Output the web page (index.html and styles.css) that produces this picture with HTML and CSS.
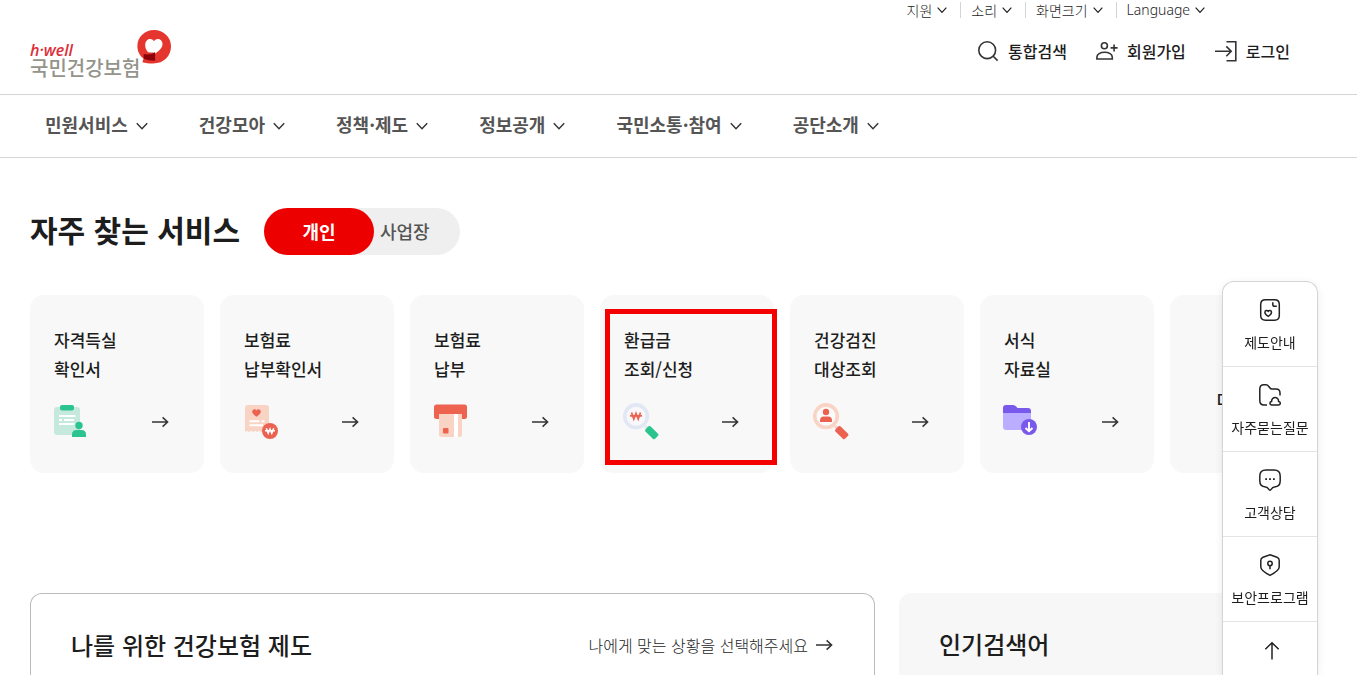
FILE: index.html
```html
<!DOCTYPE html>
<html lang="ko">
<head>
<meta charset="utf-8">
<meta name="viewport" content="width=device-width, initial-scale=1">
<title>국민건강보험</title>
<link rel="stylesheet" href="styles.css">
</head>
<body>
<svg class="defs" aria-hidden="true">
  <symbol id="chev" viewBox="0 0 12 12"><path d="M0.8 3.2 6 8.8 11.2 3.2" fill="none" stroke="currentColor" stroke-width="1.4"/></symbol>
  <symbol id="arrow" viewBox="0 0 18 12"><path d="M1 6H16.6M11.6 1.4 16.6 6 11.6 10.6" fill="none" stroke="currentColor" stroke-width="1.5"/></symbol>
</svg>
<div class="page">
  <header class="header">
    <a class="logo" href="#" aria-label="h-well 국민건강보험">
      <span class="logo-text"><span class="logo-en">h·well</span><span class="logo-ko">국민건강보험</span></span>
      <svg class="logo-mark" viewBox="0 0 34 34" aria-hidden="true">
        <path d="M17 0C26.4 0 34 7 34 16.2 34 26 27 33.4 16 33.4 12 33.4 8.500 33.100 5.400 32.200L6.600 28.500C2.700 25.700 0.400 21.500 0.400 16.200 0.400 7 7.600 0 17 0Z" fill="#e5352f"/>
        <path d="M17 11.200C18.600 8.500 22.100 8.300 24 10.200 26.100 12.300 26 15.600 24.100 18.200 22.500 20.400 20.200 22 18 23.800L17.800 22.700 11 22.200C9.200 20 8 17.500 8.200 14.500 8.500 9 14.500 7.400 17 11.200Z" fill="#fff"/>
        <path d="M6.700 24Q12.500 25.400 18.100 22.200V30.600Q12 30.900 6.700 28.700Z" fill="#8d0008"/>
      </svg>
    </a>
    <div class="tools">
      <div class="utility">
        <button type="button">지원<svg><use href="#chev"/></svg></button>
        <button type="button">소리<svg><use href="#chev"/></svg></button>
        <button type="button">화면크기<svg><use href="#chev"/></svg></button>
        <button type="button" class="lang">Language<svg><use href="#chev"/></svg></button>
      </div>
      <div class="account">
        <a href="#"><svg viewBox="0 0 22 22"><circle cx="10.200" cy="10.200" r="8.400"/><path d="M16.200 16.200 20.600 20.600"/></svg>통합검색</a>
        <a href="#"><svg viewBox="0 0 22 22"><circle cx="8.400" cy="5.800" r="3"/><path d="M.9 19V17.200C.9 14.300 4.300 12.300 8.600 12.300S16.300 14.300 16.300 17.200V19ZM18.100 4.400V11.400M14.600 7.900H21.600"/></svg>회원가입</a>
        <a href="#"><svg viewBox="0 0 22 22"><path d="M11.500 1.800H20.800V20.800H11.500M0 11.300H16M11.300 6.400 16.200 11.300 11.300 16.200"/></svg>로그인</a>
      </div>
    </div>
  </header>
  <nav class="nav" aria-label="주 메뉴">
    <button type="button">민원서비스<svg><use href="#chev"/></svg></button>
    <button type="button">건강모아<svg><use href="#chev"/></svg></button>
    <button type="button">정책·제도<svg><use href="#chev"/></svg></button>
    <button type="button">정보공개<svg><use href="#chev"/></svg></button>
    <button type="button">국민소통·참여<svg><use href="#chev"/></svg></button>
    <button type="button">공단소개<svg><use href="#chev"/></svg></button>
  </nav>
  <main class="main">
    <div class="title-row">
      <h1>자주 찾는 서비스</h1>
      <div class="toggle">
        <button type="button" class="on" aria-pressed="true">개인</button>
        <button type="button" class="off" aria-pressed="false">사업장</button>
      </div>
    </div>
    <div class="cards">
      <a class="card" href="#">
        <span class="card-title">자격득실<br>확인서</span>
        <span class="card-foot">
          <svg class="pic" viewBox="0 0 36 38"><rect x="1" y="4" width="26" height="28" rx="3" fill="#c5eadd"/><rect x="7" y="2" width="14" height="5.500" rx="2" fill="#2cc48e"/><path d="M6 13H22.500M6 17H9M11 17H21M6 21H21.500" stroke="#fff" stroke-width="2"/><circle cx="26" cy="22.500" r="3.700" fill="#2cc48e"/><path d="M19 34V31.500Q19 27 23.500 27H28.500Q33 27 33 31.500V34Z" fill="#2cc48e"/></svg>
          <svg class="go"><use href="#arrow"/></svg>
        </span>
      </a>
      <a class="card" href="#">
        <span class="card-title">보험료<br>납부확인서</span>
        <span class="card-foot">
          <svg class="pic" viewBox="0 0 36 38"><path d="M2 5Q2 2 5 2H23Q26 2 26 5V29L24 27.800 22 29 20 27.800 18 29 16 27.800 14 29 12 27.800 10 29 8 27.800 6 29 4 27.800 2 29Z" fill="#f9d3c3"/><path d="M13.500 13.800C10.500 11.600 9.200 10.300 9.200 8.600 9.200 6 12.300 5.300 13.500 7.400 14.700 5.300 17.800 6 17.800 8.600 17.800 10.300 16.500 11.600 13.500 13.800Z" fill="#eb6350"/><path d="M6.500 18.200H16.500M18.500 18.200H21.500M6.500 22.200H20" stroke="#fff" stroke-width="2"/><circle cx="27" cy="28" r="8" fill="#eb6350"/><path d="M23.300 25.300 25.200 30.200 27 26 28.800 30.200 30.700 25.300M22 27.800H32" fill="none" stroke="#fff" stroke-width="1.600"/></svg>
          <svg class="go"><use href="#arrow"/></svg>
        </span>
      </a>
      <a class="card" href="#">
        <span class="card-title">보험료<br>납부</span>
        <span class="card-foot">
          <svg class="pic" viewBox="0 0 36 38"><rect x="1" y="1.500" width="33" height="14.500" rx="2.500" fill="#ee6350"/><path d="M6 11H29V31Q29 34 26 34H9Q6 34 6 31Z" fill="#f9d3c3"/><path d="M21 11H25V34H21Z" fill="#fff"/><rect x="10" y="25" width="5.500" height="5.500" rx="1" fill="#ee6350"/></svg>
          <svg class="go"><use href="#arrow"/></svg>
        </span>
      </a>
      <a class="card marked" href="#">
        <span class="card-title">환급금<br>조회/신청</span>
        <span class="card-foot">
          <svg class="pic" viewBox="0 0 36 38"><circle cx="13" cy="13.200" r="11.300" fill="#f8f8fb" stroke="#e2e7f4" stroke-width="3.600"/><path d="M22 23 25 26" stroke="#e2e7f4" stroke-width="3"/><path d="M8.500 9.500 10.800 16 13 10.500 15.200 16 17.500 9.500M7 12.800H19" fill="none" stroke="#eb6350" stroke-width="1.800"/><rect x="22" y="26" width="13.500" height="7.200" rx="1.800" transform="rotate(44 28.750 29.600)" fill="#2cc48e"/></svg>
          <svg class="go"><use href="#arrow"/></svg>
        </span>
      </a>
      <a class="card" href="#">
        <span class="card-title">건강검진<br>대상조회</span>
        <span class="card-foot">
          <svg class="pic" viewBox="0 0 36 38"><circle cx="13" cy="13.200" r="11.300" fill="#fafafa" stroke="#f9d3c3" stroke-width="3.600"/><path d="M22 23 25 26" stroke="#f9d3c3" stroke-width="3"/><circle cx="13" cy="9" r="3.200" fill="#eb6350"/><path d="M7 19V17.500Q7 13.500 11 13.500H15Q19 13.500 19 17.500V19Z" fill="#eb6350"/><rect x="22" y="26" width="13.500" height="7.200" rx="1.800" transform="rotate(44 28.750 29.600)" fill="#eb6350"/></svg>
          <svg class="go"><use href="#arrow"/></svg>
        </span>
      </a>
      <a class="card" href="#">
        <span class="card-title">서식<br>자료실</span>
        <span class="card-foot">
          <svg class="pic" viewBox="0 0 36 38"><path d="M0 5Q0 2 3 2H10Q12 2 13.200 3.600L14.500 5H25Q28 5 28 8V12H0Z" fill="#7859ec"/><path d="M0 10H28V27H3Q0 27 0 24Z" fill="#bbadff"/><circle cx="26" cy="24" r="8" fill="#7859ec"/><path d="M26 19V28M22.500 25 26 28.300 29.500 25" fill="none" stroke="#fff" stroke-width="1.900"/></svg>
          <svg class="go"><use href="#arrow"/></svg>
        </span>
      </a>
      <a class="card more" href="#">더보기<svg class="go"><use href="#arrow"/></svg></a>
    </div>
    <div class="panels">
      <section class="panel">
        <h2>나를 위한 건강보험 제도</h2>
        <a href="#">나에게 맞는 상황을 선택해주세요<svg class="go"><use href="#arrow"/></svg></a>
      </section>
      <section class="panel gray"><h2>인기검색어</h2></section>
    </div>
  </main>
</div>
<aside class="quick">
  <a href="#"><svg viewBox="0 0 24 24"><path d="M8 1.800H16.500Q21.300 1.800 21.300 6.500V17.500Q21.300 22.200 16.500 22.200H7.500Q2.700 22.200 2.700 17.500V6.500Q2.700 1.800 7.500 1.800ZM14.800 4.300V6.500Q14.800 8.300 16.600 8.300H18.800M10.200 18.300C7.800 17 6.900 15.800 6.900 14.300 6.900 12.200 9.300 12 10.200 13.300 11.100 12 13.500 12.200 13.500 14.300 13.500 15.800 12.600 17 10.200 18.300Z"/></svg>제도안내</a>
  <a href="#"><svg viewBox="0 0 24 24"><path d="M9 22H6Q1.800 22 1.800 17.500V6Q1.800 1.800 6 1.800H8Q9.600 1.800 10.600 3.200L12 5Q12.600 6 14 6H18Q22 6 22 10V12.500M14 22H20.200C23 22 22.900 18.600 20.600 18.400 20.700 13.200 13.500 13.200 13.600 18.400 11.300 18.700 11.300 22 14 22Z"/></svg>자주묻는질문</a>
  <a href="#"><svg viewBox="0 0 24 24"><path d="M8 2H16Q22.200 2 22.200 8V13Q22.200 18.600 16.500 18.900 14.500 19 13.300 21.200 12 23.300 10.700 21.200 9.500 19 7.500 18.900 1.800 18.600 1.800 13V8Q1.800 2 8 2Z"/><path d="M7.200 11.200H9M11.100 11.200H12.900M15 11.200H16.800" stroke-width="1.800"/></svg>고객상담</a>
  <a href="#"><svg viewBox="0 0 24 24"><path d="M12 1.800 19 4.200Q21.200 5 21.200 7.300V14Q21.200 17.600 12 22.300 2.800 17.600 2.800 14V7.300Q2.800 5 5 4.200Z"/><circle cx="12" cy="10.500" r="2.200"/><path d="M12 12.700V16.200"/></svg>보안프로그램</a>
  <a class="top" href="#" aria-label="맨 위로"><svg viewBox="0 0 24 24"><path d="M14 21.500V4.800M7.300 11.300 14 4.800 20.700 11.300"/></svg></a>
</aside>
</body>
</html>
```

FILE: styles.css
```css
* { box-sizing: border-box; }
body {
  margin: 0;
  background: #fff;
  color: #1d1d1d;
  font-family: "Noto Sans CJK KR", "Noto Sans", sans-serif;
  font-size: 16px;
}
a { color: inherit; text-decoration: none; }
button {
  padding: 0;
  border: 0;
  background: none;
  color: inherit;
  font: inherit;
  cursor: pointer;
}
h1, h2 { margin: 0; }
svg { display: block; flex: none; }
.defs { position: absolute; width: 0; height: 0; }
.page { display: flex; flex-direction: column; min-height: 100vh; }

.header {
  display: flex;
  justify-content: space-between;
  height: 95px;
  padding-left: 30px;
  border-bottom: 1px solid #d4d4d4;
}
.logo { display: flex; align-items: flex-start; padding-top: 30px; }
.logo-text { display: flex; flex-direction: column; padding-top: 12px; }
.logo-en {
  color: #dc3038;
  font: italic 600 16px/16px "Open Sans", sans-serif;
}
.logo-ko {
  color: #94948a;
  font-size: 20px;
  font-weight: 500;
  line-height: 20px;
  margin-right: -3px;
}
.logo-mark { width: 34px; height: 34px; }
.tools { display: flex; flex-direction: column; }
.utility {
  display: flex;
  justify-content: flex-end;
  padding-right: 152px;
  font-size: 14px;
  font-weight: 300;
  line-height: 18px;
}
.utility button { display: flex; align-items: center; gap: 5px; height: 20px; }
.utility .lang { font-family: "Noto Sans", sans-serif; }
.utility svg { width: 10px; height: 10px; }
.utility button + button::before {
  content: "";
  width: 1px;
  height: 16px;
  margin: 0 5px 0 13px;
  background: #d4d4d4;
}
.account {
  display: flex;
  justify-content: flex-end;
  gap: 29px;
  padding: 18px 67px 0 0;
  font-weight: 500;
  line-height: 26px;
}
.account a { display: flex; align-items: center; gap: 9px; }
.account svg {
  width: 22px;
  height: 22px;
  fill: none;
  stroke: #333;
  stroke-width: 1.6;
}

.nav {
  display: flex;
  gap: 51px;
  height: 63px;
  padding: 0 45px 5px;
  border-bottom: 1px solid #d4d4d4;
  color: #555;
  font-size: 18px;
  font-weight: 700;
}
.nav button { display: flex; align-items: center; gap: 8px; white-space: nowrap; }
.nav svg { width: 12px; height: 12px; margin-top: 4px; color: #333; }

.main {
  flex: 1;
  display: flex;
  flex-direction: column;
  padding: 50px 40px 0 30px;
}
.title-row { display: flex; align-items: flex-start; gap: 24px; height: 47px; }
h1 { font-size: 30px; font-weight: 700; line-height: 42px; }
.toggle {
  display: flex;
  border-radius: 24px;
  background: #efefef;
  font-size: 18px;
  font-weight: 500;
  line-height: 47px;
}
.on { width: 110px; border-radius: 24px; background: #ec0000; color: #fff; font-weight: 700; }
.off { padding: 0 30px 0 6px; color: #555; }

.cards { display: flex; gap: 16px; margin-top: 40px; overflow: hidden; }
.card {
  position: relative;
  flex: 0 0 174px;
  padding: 30px 24px 32px;
  border-radius: 14px;
  background: #f8f8f8;
}
.card-title { display: block; font-size: 17px; font-weight: 500; line-height: 29px; }
.card-foot {
  display: flex;
  align-items: center;
  justify-content: space-between;
  margin: 20px 11px 0 -1px;
}
.pic { width: 36px; height: 38px; }
.go { width: 18px; height: 12px; color: #333; }
.marked::after {
  content: "";
  position: absolute;
  inset: 14px -3px 8px 5px;
  border: 5px solid #f40000;
}
.more {
  display: flex;
  align-items: center;
  justify-content: center;
  gap: 16px;
  padding: 60px 0 30px;
  font-size: 17px;
  font-weight: 500;
}

.panels {
  flex: 1;
  display: grid;
  grid-template-columns: 845fr 418fr;
  gap: 24px;
  margin-top: 120px;
}
.panel {
  display: flex;
  align-items: flex-start;
  justify-content: space-between;
  padding: 32px 41px 0 40px;
  border: 1px solid #bbb;
  border-bottom: 0;
  border-radius: 12px 12px 0 0;
}
.panel h2 { font-size: 24px; font-weight: 500; line-height: 38px; }
.panel a {
  display: flex;
  align-items: center;
  gap: 7px;
  font-weight: 300;
  line-height: 38px;
}
.gray { border: 0; background: #f7f7f7; }

.quick {
  position: fixed;
  top: 281px;
  right: 39px;
  bottom: 0;
  width: 96px;
  border: 1px solid #d4d4d4;
  border-bottom: 0;
  border-radius: 12px 12px 0 0;
  background: #fff;
  box-shadow: 0 2px 8px rgba(0, 0, 0, 0.08);
  overflow: hidden;
}
.quick a {
  display: flex;
  flex-direction: column;
  align-items: center;
  gap: 10px;
  height: 85px;
  padding-top: 16px;
  border-bottom: 1px solid #e4e4e4;
  font-size: 14px;
  line-height: 20px;
  white-space: nowrap;
}
.quick svg {
  width: 24px;
  height: 24px;
  fill: none;
  stroke: #222;
  stroke-width: 1.5;
}
.quick .top { border-bottom: 0; }
```
